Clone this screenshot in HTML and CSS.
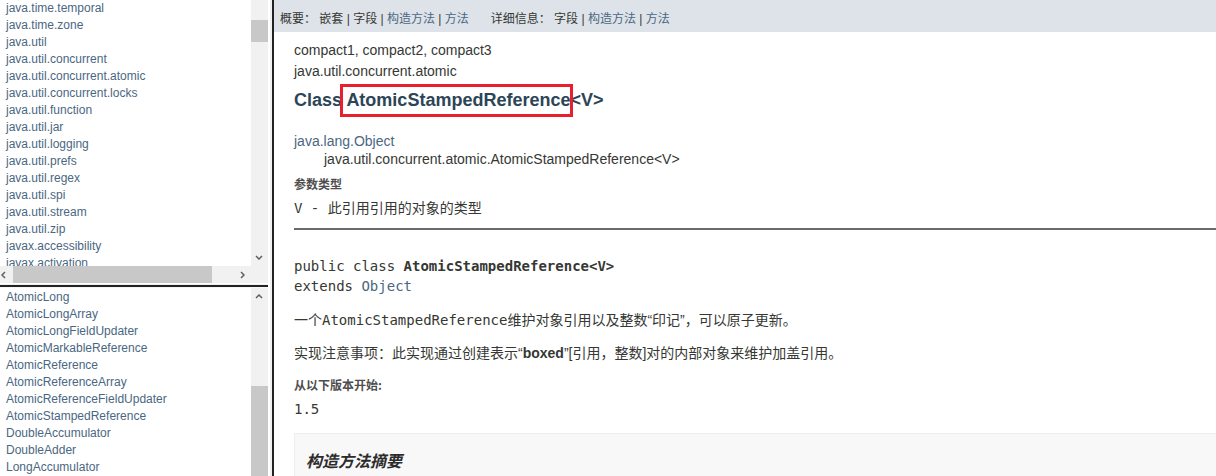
FILE: index.html
```html
<!DOCTYPE html>
<html lang="zh-CN">
<head>
<meta charset="utf-8">
<title>AtomicStampedReference</title>
<link rel="stylesheet" href="styles.css">
</head>
<body>
<div class="frameset">
  <div class="leftcol">
    <div class="frame-top">
      <div class="viewport">
        <ul class="index-list pkg-list">
          <li><a>java.time.temporal</a></li>
          <li><a>java.time.zone</a></li>
          <li><a>java.util</a></li>
          <li><a>java.util.concurrent</a></li>
          <li><a>java.util.concurrent.atomic</a></li>
          <li><a>java.util.concurrent.locks</a></li>
          <li><a>java.util.function</a></li>
          <li><a>java.util.jar</a></li>
          <li><a>java.util.logging</a></li>
          <li><a>java.util.prefs</a></li>
          <li><a>java.util.regex</a></li>
          <li><a>java.util.spi</a></li>
          <li><a>java.util.stream</a></li>
          <li><a>java.util.zip</a></li>
          <li><a>javax.accessibility</a></li>
          <li><a>javax.activation</a></li>
          <li><a>javax.activity</a></li>
        </ul>
      </div>
      <div class="vscroll">
        <div class="thumb thumb-top"></div>
        <div class="track-fill"></div>
        <div class="arrow-btn"><svg width="8" height="5" viewBox="0 0 8 5"><path d="M1 1 L4 4 L7 1" fill="none" stroke="#606060" stroke-width="1.5"/></svg></div>
      </div>
      <div class="hscroll">
        <div class="harrow harrow-left"><svg width="5" height="8" viewBox="0 0 5 8"><path d="M4 1 L1 4 L4 7" fill="none" stroke="#606060" stroke-width="1.5"/></svg></div>
        <div class="hthumb"></div>
        <div class="track-fill"></div>
        <div class="harrow harrow-right"><svg width="5" height="8" viewBox="0 0 5 8"><path d="M1 1 L4 4 L1 7" fill="none" stroke="#606060" stroke-width="1.5"/></svg></div>
      </div>
      <div class="corner"></div>
    </div>
    <div class="hsplit"></div>
    <div class="frame-bottom">
      <div class="viewport">
        <ul class="index-list cls-list">
          <li><a>AtomicLong</a></li>
          <li><a>AtomicLongArray</a></li>
          <li><a>AtomicLongFieldUpdater</a></li>
          <li><a>AtomicMarkableReference</a></li>
          <li><a>AtomicReference</a></li>
          <li><a>AtomicReferenceArray</a></li>
          <li><a>AtomicReferenceFieldUpdater</a></li>
          <li><a>AtomicStampedReference</a></li>
          <li><a>DoubleAccumulator</a></li>
          <li><a>DoubleAdder</a></li>
          <li><a>LongAccumulator</a></li>
          <li><a>LongAdder</a></li>
        </ul>
      </div>
      <div class="vscroll">
        <div class="arrow-btn"><svg width="8" height="5" viewBox="0 0 8 5"><path d="M1 4 L4 1 L7 4" fill="none" stroke="#606060" stroke-width="1.5"/></svg></div>
        <div class="track-gap"></div>
        <div class="thumb thumb-bottom"></div>
      </div>
    </div>
  </div>
  <div class="vsplit"></div>
  <div class="main">
    <div class="subnav">
      <ul class="navgroup">
        <li>概要：&nbsp;</li>
        <li>嵌套&nbsp;|&nbsp;</li>
        <li>字段&nbsp;|&nbsp;</li>
        <li><a class="link">构造方法</a>&nbsp;|&nbsp;</li>
        <li><a class="link">方法</a></li>
      </ul>
      <ul class="navgroup">
        <li>详细信息：&nbsp;</li>
        <li>字段&nbsp;|&nbsp;</li>
        <li><a class="link">构造方法</a>&nbsp;|&nbsp;</li>
        <li><a class="link">方法</a></li>
      </ul>
    </div>
    <div class="content">
      <div class="class-header">
        <div class="subtitle">compact1, compact2, compact3</div>
        <div class="subtitle">java.util.concurrent.atomic</div>
        <h2 class="title">Class <span class="marked">AtomicStampedReference</span>&lt;V&gt;</h2>
        <ul class="inheritance">
          <li><a class="link">java.lang.Object</a></li>
          <li class="child">java.util.concurrent.atomic.AtomicStampedReference&lt;V&gt;</li>
        </ul>
        <dl class="tagged">
          <dt>参数类型</dt>
          <dd class="mono-dd"><code>V</code> - 此引用引用的对象的类型</dd>
        </dl>
        <div class="rule"></div>
      </div>
      <div class="description">
        <pre class="signature">public class <b>AtomicStampedReference&lt;V&gt;</b>
extends <a class="link">Object</a></pre>
        <p class="block first">一个<code>AtomicStampedReference</code>维护对象引用以及整数“印记”，可以原子更新。</p>
        <p class="block second">实现注意事项：此实现通过创建表示“<b class="boxed">boxed</b>”[引用，整数]对的内部对象来维护加盖引用。</p>
        <dl class="tagged since">
          <dt>从以下版本开始:</dt>
          <dd class="mono-dd">1.5</dd>
        </dl>
        <div class="summary">
          <h3>构造方法摘要</h3>
        </div>
      </div>
    </div>
  </div>
</div>
</body>
</html>
```

FILE: styles.css
```css
* { box-sizing: border-box; margin: 0; padding: 0; }

html, body {
  width: 1216px;
  height: 476px;
  overflow: hidden;
  background: #ffffff;
}

body {
  font-family: "Liberation Sans", Arial, "Noto Sans CJK SC", sans-serif;
  color: #353833;
}

a { text-decoration: none; color: #4a6782; }
.link { color: #4a6782; }

.frameset {
  display: flex;
  height: 476px;
}

/* ---------- left column ---------- */
.leftcol {
  width: 268px;
  flex: none;
  display: flex;
  flex-direction: column;
}

.frame-top {
  height: 283px;
  display: grid;
  grid-template-columns: 251px 17px;
  grid-template-rows: 266px 17px;
}

.viewport {
  overflow: hidden;
  background: #ffffff;
}

.index-list {
  list-style: none;
  padding-left: 6px;
  font-size: 12px;
  line-height: 17px;
  white-space: nowrap;
}

.pkg-list { margin-top: 0; }
.cls-list { padding-top: 1px; }

.vscroll {
  background: #f1f1f1;
  display: flex;
  flex-direction: column;
  overflow: hidden;
}

.thumb { background: #c8c8c8; flex: none; }
.thumb-top { margin-top: 20px; height: 22px; }
.thumb-bottom { flex: 1; }
.track-fill { flex: 1; }
.track-gap { height: 81px; flex: none; }

.arrow-btn {
  height: 17px;
  flex: none;
  display: flex;
  align-items: center;
  justify-content: center;
  padding-right: 2px;
}

.hscroll {
  background: #f1f1f1;
  display: flex;
  align-items: stretch;
}

.harrow {
  flex: none;
  display: flex;
  align-items: center;
  justify-content: center;
}
.harrow-left { width: 13px; padding-right: 6px; }
.harrow-right { width: 17px; padding-right: 1px; }
.hthumb { width: 199px; background: #c8c8c8; flex: none; }

.corner { background: #f1f1f1; }

.hsplit {
  height: 5px;
  flex: none;
  background: linear-gradient(#ffffff 0 1px, #f0f0f0 1px 2px, #222222 2px 4px, #f6f6f6 4px 5px);
}

.frame-bottom {
  flex: 1;
  display: grid;
  grid-template-columns: 251px 17px;
  min-height: 0;
}

/* ---------- splitter ---------- */
.vsplit {
  width: 6px;
  flex: none;
  background: #f0f0f0;
  border-left: 2px solid #ffffff;
  border-right: 2px solid #222222;
}

/* ---------- main frame ---------- */
.main {
  flex: 1;
  min-width: 0;
  overflow: hidden;
  display: flex;
  flex-direction: column;
}

.subnav {
  height: 32px;
  flex: none;
  background: #dee3e9;
  display: flex;
  padding: 11px 0 0 6px;
  font-size: 12px;
  line-height: 16px;
  white-space: nowrap;
}

.navgroup {
  list-style: none;
  display: flex;
  margin-right: 22px;
}

.content {
  white-space: nowrap;
}

.class-header {
  padding-left: 20px;
}

.subtitle {
  font-size: 14px;
  line-height: 21px;
}
.subtitle:first-child { margin-top: 8px; }

.title {
  margin-top: 6px;
  font-size: 18px;
  line-height: 24px;
  font-weight: bold;
  color: #2c4557;
}

.marked { position: relative; }
.marked::after {
  content: "";
  position: absolute;
  left: -6px;
  right: -3px;
  top: -6px;
  bottom: -7px;
  border: 3px solid #e8202d;
}

.inheritance {
  list-style: none;
  margin-top: 20px;
  font-size: 14px;
  line-height: 18px;
}
.inheritance .child { padding-left: 30px; }

.tagged dt {
  margin-top: 8px;
  font-size: 12px;
  line-height: 16px;
  font-weight: bold;
  color: #4e4e4e;
  font-family: "Noto Sans CJK SC", "Liberation Sans", sans-serif;
}

.tagged dd {
  margin-top: 6px;
  font-size: 14px;
  line-height: 20px;
}

.mono-dd {
  font-family: "DejaVu Sans Mono", "Noto Sans CJK SC", monospace;
}

code {
  font-family: "DejaVu Sans Mono", monospace;
  font-size: 14px;
}

.rule {
  margin-top: 10px;
  height: 2px;
  background: #6b6b6b;
}

.description {
  padding-left: 20px;
}

.signature {
  margin-top: 26px;
  font-family: "DejaVu Sans Mono", monospace;
  font-size: 14px;
  line-height: 20px;
  color: #353833;
}

.block {
  font-family: "Liberation Sans", Arial, "Noto Sans CJK SC", sans-serif;
  font-size: 14px;
  line-height: 20px;
  color: #353833;
}
.block.first { margin-top: 14px; }
.block.second { margin-top: 13px; }

.boxed {
  font-weight: bold;
}

.since dt { margin-top: 14px; }

.summary {
  margin-top: 14px;
  height: 60px;
  background: #f8f8f8;
  border: 1px solid #ededed;
  border-right: none;
  padding: 15px 0 0 11px;
}

.summary h3 {
  font-family: "Noto Sans CJK SC", "Liberation Sans", sans-serif;
  font-size: 16px;
  line-height: 22px;
  font-weight: bold;
  font-style: italic;
  color: #2c2c2c;
}
```
